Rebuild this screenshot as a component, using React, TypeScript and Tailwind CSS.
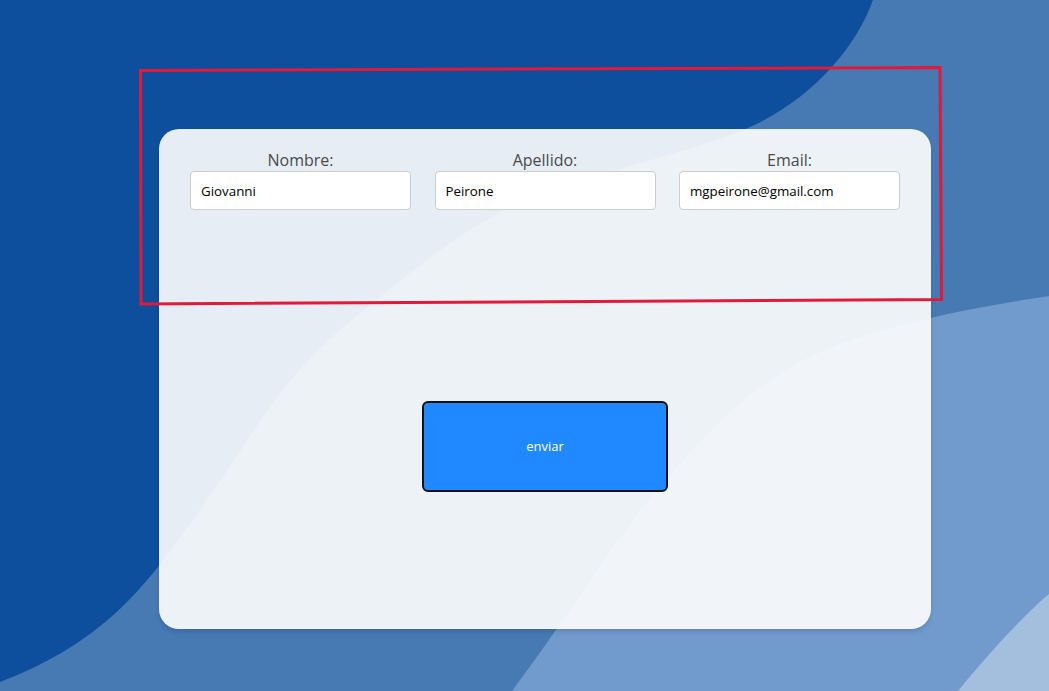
import React from 'react'

const fields = [
    { id: 'nombre', label: 'Nombre:', value: 'Giovanni' },
    { id: 'apellido', label: 'Apellido:', value: 'Peirone' },
    { id: 'email', label: 'Email:', value: 'mgpeirone@gmail.com' },
]

function Waves() {
    return (
        <svg className="absolute inset-0 h-full w-full" viewBox="0 0 1049 691" preserveAspectRatio="none">
            <path
                d="M873,0 C855,50 810,100 750,127 S560,180 504,210 S400,280 340,330 S250,440 200,510 S110,640 0,682 L0,691 L1049,691 L1049,0 Z"
                fill="#4779b3"
            />
            <path
                d="M1049,296 C990,305 900,320 830,348 S720,420 670,475 S580,600 512,691 L1049,691 Z"
                fill="#719bcd"
            />
            <path d="M1049,594 C1025,614 990,652 958,691 L1049,691 Z" fill="#a4bedd" />
        </svg>
    )
}

export default function App() {
    return (
        <div className="relative h-[691px] w-full overflow-hidden bg-[#0d4f9c] font-['Open_Sans',sans-serif]">
            <Waves />

            <div className="relative pl-[159px] pt-[129px]">
                <form
                    className="flex h-[500px] w-[772px] flex-col rounded-[20px] bg-white/90 px-[31px] pt-[21px] shadow-md"
                    onSubmit={e => e.preventDefault()}
                >
                    {/* campos */}
                    <div className="flex gap-[23.5px]">
                        {fields.map(field => (
                            <div key={field.id} className="flex w-[221px] flex-col items-center">
                                <label htmlFor={field.id} className="text-[16px] leading-[20px] text-[#4a4a4a]">
                                    {field.label}
                                </label>
                                <input
                                    id={field.id}
                                    defaultValue={field.value}
                                    className="mt-px h-[39px] w-full rounded-[4px] border border-[#cccccc] bg-white px-[10px] text-[13.33px] text-black outline-none"
                                />
                            </div>
                        ))}
                    </div>

                    <button
                        type="submit"
                        className="mx-auto mt-[191px] h-[91px] w-[246px] rounded-[6px] border-2 border-[#111111] bg-[#2189ff] pt-px text-[13px] text-white"
                    >
                        enviar
                    </button>
                </form>
            </div>

            {/* marca roja */}
            <svg className="pointer-events-none absolute inset-0 h-full w-full" viewBox="0 0 1049 691">
                <polygon
                    points="140.5,70.5 940,67.5 941.5,299.5 141,304"
                    fill="none"
                    stroke="#e11a3a"
                    strokeWidth="3"
                />
            </svg>
        </div>
    )
}
